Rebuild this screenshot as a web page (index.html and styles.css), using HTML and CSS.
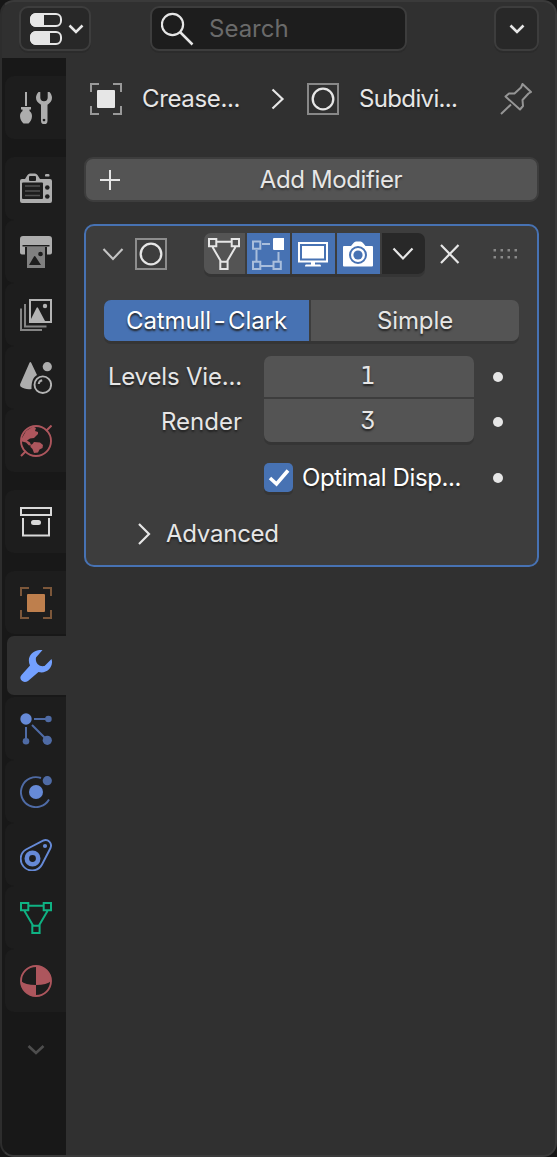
FILE: index.html
```
<!DOCTYPE html>
<html lang="en">
<head>
<meta charset="utf-8">
<title>Properties</title>
<link rel="stylesheet" href="styles.css">
</head>
<body>
<div class="editor">
  <header class="header">
    <button class="box editor-type">
      <svg width="32" height="32" viewBox="0 0 32 32"><g fill="none" stroke="#e6e6e6" stroke-width="2"><rect x="1" y="1" width="30" height="12" rx="5"/><rect x="1" y="19" width="30" height="12" rx="5"/></g><path fill="#e6e6e6" d="M6 0h8v14H6a6 6 0 0 1-6-6V6a6 6 0 0 1 6-6zM6 18h14v14H6a6 6 0 0 1-6-6v-2a6 6 0 0 1 6-6z"/></svg>
      <svg width="16" height="10" viewBox="0 0 16 10"><path class="line" d="M1.500 1.500 8 8l6.500-6.500" stroke-width="2.500"/></svg>
    </button>
    <div class="box search">
      <svg width="34" height="34" viewBox="0 0 34 34"><circle class="line" cx="11.500" cy="12.500" r="10.600" stroke-width="2.200"/><path class="line" d="m19 20 12.500 12.500" stroke-width="2.500"/></svg>
      <span>Search</span>
    </div>
    <button class="box options"><svg width="16" height="10" viewBox="0 0 16 10"><path class="line" d="M1.500 1.500 8 8l6.500-6.500" stroke-width="2.600"/></svg></button>
  </header>
  <div class="body">
    <nav class="tabs">
      <div class="group">
        <div class="tab"><svg class="ic" viewBox="0 0 32 32" fill="#adadad"><path d="M5 0h2v14H5zM1 15h10v2.500H9.500v1.500c1.500 1 2.500 2.800 2.500 5 0 3.200-1.500 5.500-3.500 7.500h-5C1.500 29.500 0 27.200 0 24c0-2.200 1-4 2.500-5v-1.500H1z"/><path fill-rule="evenodd" d="M18.500 0h1.800v5.500a3.700 3.700 0 0 0 7.400 0V0h1.800c1.500 1.600 2.500 3.600 2.500 5.800 0 3-1.800 5.400-4.500 6.900V29a3.200 3.200 0 0 1-6.500 0V12.700C18 11.200 16 8.800 16 5.800c0-2.200 1-4.200 2.500-5.800zM24 26.700a1.300 1.300 0 1 0 .01 0z"/></svg></div>
      </div>
      <div class="group">
        <div class="tab"><svg class="ic" viewBox="0 0 32 32" fill="#adadad"><path d="M2 6h3l2.500-4Q8.500.5 10 .5h5q1.500 0 2.500 1.500L20 6h10q2 0 2 2v20q0 2-2 2H2q-2 0-2-2V8q0-2 2-2z"/><rect x="25" y="1" width="4.500" height="2.600" rx="1.200"/><g fill="#1d1d1d"><rect x="9" y="3" width="7" height="5" rx="1"/><rect x="2" y="9.500" width="21" height="16.500" rx="1"/><circle cx="27.300" cy="14.500" r="2.300"/><circle cx="27.300" cy="23.500" r="2.300"/></g><path d="M5 13h15M5 18h15M5 22.500h15" stroke="#515151" stroke-width="1.600"/></svg></div>
        <div class="tab"><svg class="ic" viewBox="0 0 32 32"><path d="M3 0h26q3 0 3 3v13.500q0 2-2 2h-3V11H5v7.500H2q-2 0-2-2V3q0-3 3-3z" fill="#adadad"/><path fill="#808080" d="M7 11h18v21H7z"/><path fill="#1d1d1d" d="M2.500 9h27v1.500H2.500zM9 29l5-8.500q.7-1 1.400 0L21 29z"/><circle cx="20.500" cy="18" r="2.300" fill="#1d1d1d"/></svg></div>
        <div class="tab"><svg class="ic" viewBox="0 0 32 32" fill="none" stroke-width="2"><path d="M5 5v22.500h21.500M1 9.500V31h21" stroke="#858585"/><path stroke="#b4b4b4" d="M10 1h21v22H10z"/><path fill="#b4b4b4" d="M11 22v-2l5.500-11q.8-1.500 1.600 0L25 22z"/><circle cx="25" cy="7" r="2.200" fill="#b4b4b4"/></svg></div>
        <div class="tab"><svg class="ic" viewBox="0 0 32 32"><path fill="#adadad" d="M9.500.8q.8-1.400 1.700 0L17 13c-3.700 2.300-5.500 6-5.500 14-4 .6-8-.2-10.700-2.200Q-.2 23.800.2 22z"/><circle cx="27.300" cy="4.700" r="4.600" fill="#adadad"/><circle cx="22.800" cy="22.700" r="8.300" fill="none" stroke="#b4b4b4" stroke-width="1.900"/><path d="M18.700 22q.3-3 3.500-3.700" stroke="#adadad" stroke-width="2" fill="none"/></svg></div>
        <div class="tab"><svg class="ic" viewBox="0 0 32 32"><circle cx="16" cy="16" r="15" fill="none" stroke="#ad565d" stroke-width="1.900"/><path d="m1 31 5-5M26 6l5.500-5.500" stroke="#ad565d" stroke-width="2"/><path fill="#ad565d" d="M2 13 6 6l7-4.500 3 1.500-1 3 3 1v2l-4 4-4 .5-3 2 3 2 1 2.500-2 .5-3-3-4-1zM14 17l6 .5 3 2.500-.500 3-3 1.500-1.500 3-4 .500-1.500-4-2-2v-2l2-1z"/></svg></div>
      </div>
      <div class="group">
        <div class="tab"><svg class="ic" viewBox="0 0 32 32" fill="none" stroke="#d9d9d9" stroke-width="2"><path d="M1 2h30v7H1zM3 12v17.500h26V12"/><rect x="12" y="15" width="8" height="3" rx="1.500" fill="#d9d9d9"/></svg></div>
      </div>
      <div class="group">
        <div class="tab"><svg class="ic" viewBox="0 0 32 32"><path d="M9 1H1v8M23 1h8v8M31 23v8h-8M9 31H1v-8" fill="none" stroke="#7c573a" stroke-width="2"/><rect x="7" y="7" width="18" height="18" rx="1" fill="#be7f4d"/></svg></div>
        <div class="tab active"><svg class="ic" viewBox="0 0 32 32"><path fill="#73a0ff" d="M22.500 0 16 7.500C15 13 19 17 24.500 16L31.500 9C34 16 27 24.500 18.500 22L8 31C3 34-2 29 1.500 25L10 15.500C6 7 13-1 22.500 0z"/></svg></div>
        <div class="tab"><svg class="ic" viewBox="0 0 32 32"><path d="M14 6h14M6 14v14M12 12l15 15" stroke="#4f6ba5" stroke-width="2"/><circle cx="6" cy="6" r="5.700" fill="#668ad7"/><g fill="#4f6ba5"><circle cx="28.400" cy="6" r="3.300"/><circle cx="6" cy="28.300" r="3.300"/><circle cx="27.300" cy="27.300" r="4.600"/></g></svg></div>
        <div class="tab"><svg class="ic" viewBox="0 0 32 32"><path d="M21 2A15 15 0 1 0 29 23.500" fill="none" stroke="#4f6ba5" stroke-width="1.900"/><circle cx="16" cy="16" r="7" fill="#668ad7"/><circle cx="27.300" cy="4.700" r="4.600" fill="#4f6ba5"/></svg></div>
        <div class="tab"><svg class="ic" viewBox="0 0 32 32" fill="none" stroke="#668ad7"><path d="M6 10.500 23 1.600C28-.5 32.500 4 30.500 9L22 25.500C18 33 8 33 3.500 27.500S0 14 6 10.500z" stroke-width="1.900"/><circle cx="12.500" cy="19.500" r="5.700" stroke-width="4.600"/><circle cx="25" cy="7" r="2.100" fill="#668ad7" stroke="none"/></svg></div>
        <div class="tab"><svg class="ic" viewBox="0 0 32 32" fill="none" stroke="#0fb283" stroke-width="2"><path d="M1 1h7.300v7.300H1zM23.700 1H31v7.300h-7.300zM12.300 23.700h7.300V31h-7.300zM8.500 3.700h15M4.500 9l8.500 14.500M27.500 9 19 23.500"/></svg></div>
        <div class="tab"><svg class="ic" viewBox="0 0 32 32"><circle cx="16" cy="16" r="15" fill="none" stroke="#ad565d" stroke-width="1.900"/><path fill="#ad565d" d="M16 1a15 15 0 0 1 15 15Q27 20 16 20zM16 20v11A15 15 0 0 1 1 16Q5 20 16 20z"/></svg></div>
      </div>
      <svg class="more" width="18" height="12" viewBox="0 0 18 12"><path d="m1.500 2 7.500 7 7.500-7" fill="none" stroke="#4d4d4d" stroke-width="2.600"/></svg>
    </nav>
    <main class="main">
      <div class="crumbs">
        <svg class="ic" viewBox="0 0 32 32"><path d="M9 1H1v8M23 1h8v8M31 23v8h-8M9 31H1v-8" fill="none" stroke="#999" stroke-width="2"/><rect x="7" y="7" width="18" height="18" rx="1" fill="#e6e6e6"/></svg>
        <span class="crumb first">Crease...</span>
        <svg class="sep" width="14" height="22" viewBox="0 0 14 22"><path class="line" d="m1.500 1.500 10 9.500-10 9.500" stroke-width="2.200"/></svg>
        <svg class="ic" viewBox="0 0 32 32"><path d="M1 1h30v30H1z" fill="none" stroke="#888" stroke-width="2"/><circle cx="16" cy="16" r="10.300" class="line" stroke-width="2.300"/></svg>
        <span class="crumb second">Subdivi...</span>
        <svg class="ic" viewBox="0 0 32 32" fill="none" stroke="#959595" stroke-width="2" stroke-linejoin="round"><path d="m1 31 10-9.500M22.500 1l8.500 8-2.500 1.500-6 6.500.500 6-3 3.500L5.500 13.500 9 10.500l5.500 0L21 4.500z"/></svg>
      </div>
      <button class="add"><svg width="22" height="22" viewBox="0 0 22 22"><path class="line" d="M11 1v20M1 11h20" stroke-width="2"/></svg><span>Add Modifier</span></button>
      <section class="modifier">
        <div class="mod-head">
          <svg class="chev" width="22" height="14" viewBox="0 0 22 14"><path d="m1.500 2 9.500 10 9.500-10" fill="none" stroke="#c4c4c4" stroke-width="2.100"/></svg>
          <svg class="ic kind" viewBox="0 0 32 32"><path d="M1 1h30v30H1z" fill="none" stroke="#8d8d8d" stroke-width="2"/><circle cx="16" cy="16" r="10.300" class="line" stroke-width="2.300"/></svg>
          <div class="toggles">
            <span class="tg"><svg class="ic" viewBox="0 0 32 32"><path class="line" stroke-width="2" d="M1 1h7.300v7.300H1zM23.700 1H31v7.300h-7.300zM12.300 23.700h7.300V31h-7.300zM8.500 3.700h15M4.500 9l8.500 14.500M27.500 9 19 23.500"/></svg></span>
            <span class="tg on"><svg class="ic" viewBox="0 0 32 32"><path fill="none" stroke="#a9bedc" stroke-width="2" d="M1 3.500h7.300v7.300H1zM1 23.700h7.300V31H1zM21.500 23.700h7.300V31h-7.300zM10 6h8M4.500 12v11M9 28h12M26.500 14v9"/><rect x="21" width="11.500" height="12" rx="1" fill="#fff"/></svg></span>
            <span class="tg on"><svg class="ic" viewBox="0 0 32 32"><path fill="none" stroke="#fff" stroke-width="2" d="M2 5h28v18.500H2z"/><path fill="#fff" d="M5 8h22v12.500H5zM14 24h4v2.500h5q1 0 1 2H8q0-2 1-2h5z"/></svg></span>
            <span class="tg on"><svg class="ic" viewBox="0 0 32 32"><path fill="#fff" d="M2 8h7l2.500-3Q12.500 3.500 14 3.500h4.500Q20 3.500 21 5l2.500 3H30q1 0 1 1v18.500q0 1-1 1H2q-1 0-1-1V9q0-1 1-1z"/><circle cx="16" cy="17" r="8" fill="none" stroke="#4772b3" stroke-width="2"/><circle cx="16" cy="17" r="4.600" fill="#4772b3"/></svg></span>
            <span class="tg menu"><svg width="22" height="14" viewBox="0 0 22 14"><path class="line" d="m1.500 1.500 9.500 10 9.500-10" stroke-width="2.200"/></svg></span>
          </div>
          <svg class="close" width="20" height="20" viewBox="0 0 20 20"><path class="line" d="m1 1 17.500 18M18.500 1 1 19" stroke-width="2.200"/></svg>
          <svg class="grip" width="25" height="11" viewBox="0 0 25 11" fill="#888"><path d="M.5 1H3v2.500H.5zM7.500 1H10v2.500H7.500zM14.500 1H17v2.500h-2.500zM21.500 1H24v2.500h-2.500zM.5 8H3v2.500H.5zM7.500 8H10v2.500H7.500zM14.500 8H17v2.500h-2.500zM21.500 8H24v2.500h-2.500z"/></svg>
        </div>
        <div class="segmented"><span class="seg on">Catmull<i class="hy">-</i>Clark</span><span class="seg">Simple</span></div>
        <div class="fields">
          <span class="label levels">Levels Vie...</span><span class="num top">1</span><i class="dot"></i>
          <span class="label render">Render</span><span class="num bottom">3</span><i class="dot low"></i>
        </div>
        <div class="check-row">
          <span class="check"><svg width="29" height="29" viewBox="0 0 29 29"><path d="m6 15 6.500 6L24 7.500" fill="none" stroke="#fff" stroke-width="3.600"/></svg></span>
          <span class="check-label">Optimal Disp...</span><i class="dot"></i>
        </div>
        <div class="sub"><svg width="14" height="22" viewBox="0 0 14 22"><path class="line" d="m2 1 10 10-10 10" stroke-width="2.200"/></svg><span>Advanced</span></div>
      </section>
    </main>
  </div>
</div>
</body>
</html>
```
FILE: styles.css
```
* { box-sizing: border-box; }
html, body { margin: 0; height: 100%; background: #161616; }
body { font: 24px/30px Inter, "Liberation Sans", sans-serif; color: #e6e6e6; }
svg { display: block; flex: none; }
button { font: inherit; color: inherit; padding: 0; margin: 0; }
i { font-style: normal; }
.line { fill: none; stroke: #e6e6e6; }
.ic { width: 32px; height: 32px; }

.editor { width: 557px; height: 1157px; border: 2px solid #3a3a3a; border-left-color: #2d2d2d; border-radius: 14px; background: #303030; overflow: hidden; display: flex; flex-direction: column; }
.header { height: 56px; flex: none; display: flex; align-items: flex-start; padding: 4px 16px 0 17px; }
.box { height: 45px; border: 2px solid #3d3d3d; border-radius: 9px; background: #282828; display: flex; align-items: center; box-shadow: 0 2px 0 #2b2b2b; }
.editor-type { width: 72px; padding-left: 9px; gap: 6px; }
.search { width: 257px; margin-left: 59px; background: #1d1d1d; padding-left: 9px; gap: 14px; color: #6a6a6a; }
.options { width: 45px; margin-left: auto; justify-content: center; }

.body { flex: 1; display: flex; min-height: 0; }
.tabs { width: 64px; background: #181818; padding: 18px 0 0 3px; display: flex; flex-direction: column; gap: 18px; }
.group { display: flex; flex-direction: column; }
.tab { height: 63px; padding: 16px 0 0 15px; background: #1d1d1d; border-radius: 9px 0 0 9px; }
.tab.active { height: 59px; margin: 2px 0 2px 2px; padding: 14px 0 0 13px; background: #303030; border-radius: 7px 0 0 7px; }
.more { margin: 14px 0 0 22px; }

.main { flex: 1; padding: 18px 16px 0 18px; }
.crumbs { height: 46px; display: flex; align-items: center; padding-left: 6px; text-shadow: 0 2px 2px #1c1c1c; }
.crumb { white-space: nowrap; }
.first { margin-left: 20px; width: 129px; letter-spacing: -.35px; }
.sep { margin-right: 22px; }
.second { margin-left: 20px; width: 141px; letter-spacing: -.65px; }
.add { width: 455px; height: 45px; margin-top: 35px; border: 2px solid #3d3d3d; border-radius: 9px; background: #545454; display: flex; align-items: center; padding-left: 13px; text-shadow: 0 2px 2px #333; }
.add span { flex: 1; padding-left: 4px; text-align: center; letter-spacing: -.38px; }

.modifier { width: 455px; height: 343px; margin-top: 22px; border: 2px solid #4772b3; border-radius: 10px; background: #3d3d3d; padding: 7px 18px 0; text-shadow: 0 2px 2px #222; }
.mod-head { height: 41px; display: flex; align-items: center; }
.chev { margin-left: -2px; }
.kind { margin-left: 11px; }
.toggles { display: flex; gap: 2px; margin-left: 37px; border-radius: 7px; overflow: hidden; box-shadow: 0 3px 0 #353535; }
.tg { width: 43px; height: 41px; background: #545454; display: flex; align-items: center; justify-content: center; padding-right: 1.500px; }
.tg:first-child { width: 41px; }
.tg.on { background: #4772b3; }
.tg.menu { background: #282828; }
.close { margin-left: 15px; }
.grip { margin-left: 33px; }
.segmented { display: grid; grid-template-columns: 205px 208px; gap: 2px; margin-top: 26px; border-radius: 7px; overflow: hidden; box-shadow: 0 3px 0 #353535; }
.seg { height: 41px; line-height: 41px; text-align: center; background: #545454; letter-spacing: -.1px; }
.seg.on { background: #4772b3; color: #fff; }
.hy { display: inline-block; width: 17px; text-align: center; transform: scaleX(1.15); }
.fields { display: grid; grid-template-columns: 138px 210px 10px; column-gap: 22px; row-gap: 2px; margin-top: 15px; align-items: center; }
.fields .dot { margin-left: -3px; }
.fields .low { margin-top: 2px; }
.label { text-align: right; white-space: nowrap; }
.levels { letter-spacing: -.18px; }
.render { padding-top: 2px; }
.num { height: 41px; line-height: 41px; text-align: center; background: #545454; padding-right: 2px; font-feature-settings: "tnum", "cv09"; }
.top { border-radius: 7px 7px 0 0; font-family: "DejaVu Sans", sans-serif; }
.bottom { height: 43px; line-height: 44px; border-radius: 0 0 7px 7px; box-shadow: 0 3px 0 #353535; }
.dot { width: 10px; height: 10px; border-radius: 50%; background: #e6e6e6; }
.check-row { display: flex; align-items: center; margin-top: 21px; height: 29px; padding-left: 160px; color: #fff; }
.check { width: 29px; height: 29px; border-radius: 5px; background: #4772b3; box-shadow: 0 3px 0 #353535; }
.check-label { margin-left: 9px; width: 191px; white-space: nowrap; letter-spacing: -.4px; }
.sub { display: flex; align-items: center; gap: 15px; margin: 27px 0 0 33px; letter-spacing: -.25px; }
```
